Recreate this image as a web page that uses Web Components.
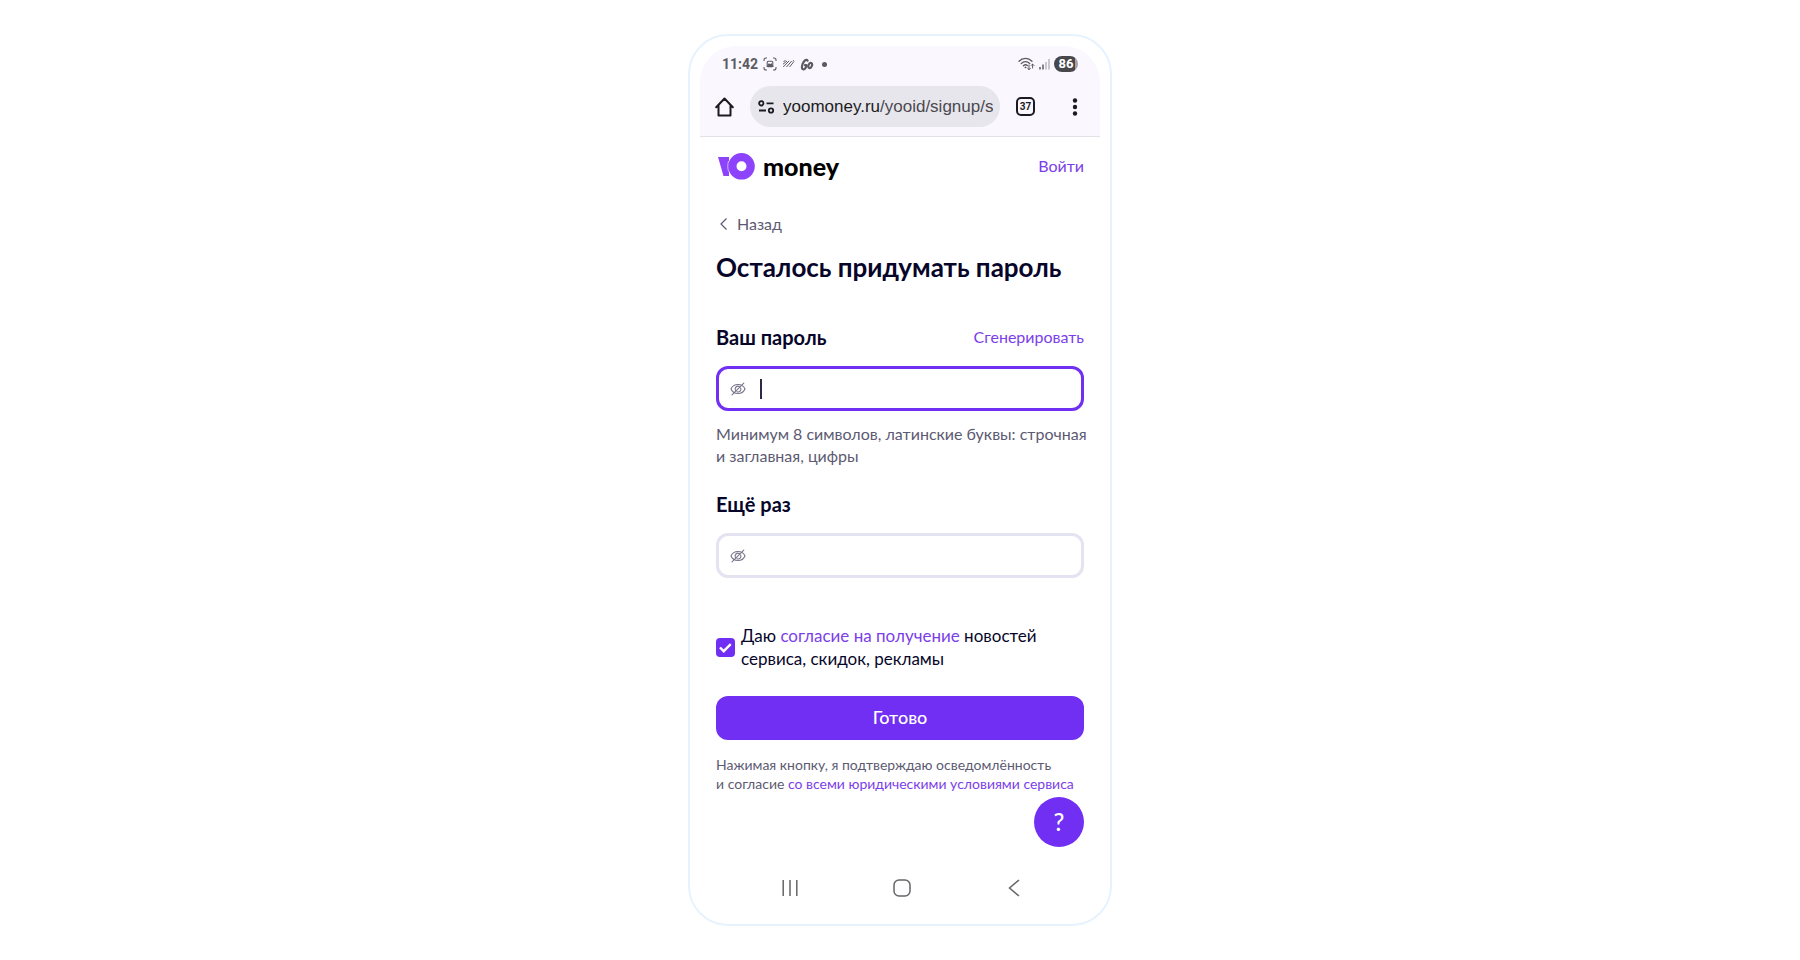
<!DOCTYPE html>
<html lang="ru">
<head>
<meta charset="utf-8">
<meta name="viewport" content="width=device-width, initial-scale=1">
<title>ЮMoney</title>
<style>
  body {
    margin: 0;
    padding: 34px 16px;
    background: #fff;
    color: #07052a;
    font-family: Lato, "Noto Sans", sans-serif;
    --accent: #712ff3;
    --link: #7b3ee8;
    --muted: #5c5a72;
    --line: #e4e3f1;
  }
</style>
</head>
<body>

<phone-frame>
  <status-bar time="11:42" battery="86"></status-bar>
  <browser-bar host="yoomoney.ru" path="/yooid/signup/s" tabs="37"></browser-bar>
  <signup-page></signup-page>
  <system-nav></system-nav>
</phone-frame>

<script>
function define(name, html, setup) {
  const template = document.createElement('template');
  template.innerHTML = html;

  window.customElements.define(name, class extends HTMLElement {
    constructor() {
      super();
      this.attachShadow({ mode: 'open' });
      this.shadowRoot.appendChild(template.content.cloneNode(true));
    }

    connectedCallback() {
      if (setup) setup(this, this.shadowRoot);
    }
  });
}

define('phone-frame', `
<style>
  :host {
    display: block;
    box-sizing: border-box;
    max-width: 424px;
    margin: 0 auto;
    padding: 10px;
    border: 2px solid #e6f3ff;
    border-radius: 40px;
  }
  .screen {
    border-radius: 36px;
    overflow: hidden;
  }
</style>
<div class="screen"><slot></slot></div>`);

define('status-bar', `
<style>
  :host {
    display: flex;
    align-items: center;
    justify-content: space-between;
    height: 36px;
    padding: 0 22px;
    background: #faf7fe;
    color: #5d5b61;
    font-family: Roboto, sans-serif;
  }
  .side { display: flex; align-items: center; gap: 5px; }
  .right { gap: 4px; }
  .time { font-size: 14px; font-weight: 700; line-height: 16px; }
  .dot { width: 5px; height: 5px; margin-left: 3px; border-radius: 50%; background: #5d5b61; }
  .battery {
    width: 24px;
    border-radius: 8px;
    background: linear-gradient(to right, #48474c 86%, #a3a2a8 86%);
    color: #fff;
    font-size: 13px;
    font-weight: 700;
    line-height: 16px;
    text-align: center;
  }
  svg { display: block; fill: none; stroke: currentColor; }
</style>
<div class="side">
  <span class="time"></span>
  <svg width="14" height="14" viewBox="0 0 14 14" stroke-width="1.1">
    <path d="M1 4V3a2 2 0 0 1 2-2h1M10 1h1a2 2 0 0 1 2 2v1M13 10v1a2 2 0 0 1-2 2h-1M4 13H3a2 2 0 0 1-2-2v-1"/>
    <rect x="4.2" y="4.2" width="5.6" height="5.6" rx="1"/>
    <path d="M4.4 9.4 6 7l1.2 1.3L8.4 7l1.4 2.4z" fill="currentColor"/>
  </svg>
  <svg width="13" height="10" viewBox="0 0 13 10">
    <path d="M1.5 2.5 3.5 1.5M1 5.2 5 2M1.2 8 7.2 1.8M4.5 8 9.7 2M7.6 8 12 2.4M10.8 2 11.8 1.4"/>
  </svg>
  <svg width="14" height="13" viewBox="0 0 14 13" stroke-width="2.2" stroke-linecap="round" stroke-linejoin="round">
    <path d="M7.6 2.6C6.4.8 4 2.4 2.6 6 1.4 9.4 1.8 11.4 3.2 11.4 4.8 11.4 6 9.5 6.6 7.2H5"/>
    <ellipse cx="10.2" cy="7.5" rx="1.7" ry="2.6" transform="rotate(22 10.2 7.5)"/>
  </svg>
  <span class="dot"></span>
</div>
<div class="side right">
  <svg width="17" height="14" viewBox="0 0 17 14" stroke-width="1.3" stroke-linecap="round">
    <path d="M1 4.3C4.6.4 10.4.4 14 4.3M3.2 6.6C5.7 4 9.3 4 11.8 6.6M5.4 8.8C6.7 7.6 8.3 7.6 9.4 8.6"/>
    <circle cx="7.4" cy="10.4" r=".6" fill="currentColor" stroke-width=".6"/>
    <path d="M11 8v4.6M9.6 11.3 11 12.7l1.4-1.4M14.6 11V7.2M13.2 8.5l1.4-1.4L16 8.5" stroke-width="1"/>
  </svg>
  <svg width="11" height="12" viewBox="0 0 11 12" stroke-width="1.5">
    <path d="M1 9v2.5M4 6.5v5"/>
    <path d="M7 4v7.5M10 1v10.5" stroke="#bab8bf"/>
  </svg>
  <span class="battery"></span>
</div>`, (el, root) => {
  root.querySelector('.time').textContent = el.getAttribute('time');
  root.querySelector('.battery').textContent = el.getAttribute('battery');
});

define('browser-bar', `
<style>
  :host {
    display: flex;
    align-items: center;
    gap: 16px;
    padding: 4px 21px 9px 15px;
    border-bottom: 1px solid #e2e1e7;
    background: #faf7fe;
    color: #1c1b22;
    font-family: "Liberation Sans", sans-serif;
  }
  button {
    display: block;
    padding: 0;
    border: 0;
    background: none;
    color: inherit;
    font: inherit;
  }
  svg { display: block; fill: none; stroke: currentColor; }
  .url {
    display: flex;
    flex: 1;
    align-items: center;
    gap: 8px;
    min-width: 0;
    height: 41px;
    padding: 0 6px 0 8px;
    border-radius: 21px;
    background: #e7e6ec;
  }
  .url svg { flex: none; }
  .address {
    overflow: hidden;
    color: #4a4950;
    font-size: 17px;
    line-height: 24px;
    white-space: nowrap;
  }
  .host { color: #1c1b22; }
  .tabs {
    box-sizing: border-box;
    width: 19px;
    height: 19px;
    border: 2px solid #1c1b22;
    border-radius: 5px;
    font: 700 10px/15px Roboto, sans-serif;
    text-align: center;
  }
  .menu { margin-left: 20px; }
</style>
<button type="button" aria-label="Домой">
  <svg width="19" height="20" viewBox="0 0 19 20" stroke-width="2" stroke-linejoin="round" stroke-linecap="round">
    <path d="M1.2 10.3 9.5 1.5l8.3 8.8M3.5 8.5v10h12v-10"/>
  </svg>
</button>
<div class="url">
  <svg width="17" height="14" viewBox="0 0 17 14" stroke-width="1.8">
    <circle cx="3.3" cy="3.3" r="2.2"/><path d="M8.5 3.3h7M1 10.5h7"/><circle cx="13" cy="10.5" r="2.2"/>
  </svg>
  <span class="address"><span class="host"></span><span class="path"></span></span>
</div>
<button type="button" class="tabs"></button>
<button type="button" class="menu" aria-label="Меню">
  <svg width="8" height="18" viewBox="0 0 8 18">
    <g fill="currentColor" stroke="none"><circle cx="4" cy="2.5" r="2.2"/><circle cx="4" cy="9" r="2.2"/><circle cx="4" cy="15.5" r="2.2"/></g>
  </svg>
</button>`, (el, root) => {
  root.querySelector('.host').textContent = el.getAttribute('host');
  root.querySelector('.path').textContent = el.getAttribute('path');
  root.querySelector('.tabs').textContent = el.getAttribute('tabs');
});

define('site-header', `
<style>
  :host {
    display: flex;
    align-items: center;
    justify-content: space-between;
    height: 57px;
  }
  .logo {
    display: flex;
    align-items: center;
    gap: 8px;
    padding-left: 1px;
    color: #000;
    font-size: 25px;
    font-weight: 900;
    line-height: 28px;
    text-decoration: none;
  }
  svg { display: block; }
</style>
<a class="logo" href="#">
  <svg width="38" height="28" viewBox="0 0 38 28" fill="#8c43fb">
    <path d="M1 5h11v19H6.5z"/>
    <path fill-rule="evenodd" d="M24.5 1a13.3 13.3 0 1 0 0 26.6 13.3 13.3 0 1 0 0-26.6zm0 8.3a5 5 0 1 1 0 10 5 5 0 1 1 0-10z"/>
    <path d="M11.6 9C10.5 12.3 10.5 16.3 11.6 19.6" fill="none" stroke="#fff" stroke-width=".6"/>
  </svg>
  <span>money</span>
</a>
<slot></slot>`);

define('password-field', `
<style>
  :host { display: block; }
  .head {
    display: flex;
    align-items: center;
    justify-content: space-between;
    margin-bottom: 17px;
    line-height: 24px;
  }
  label { font-size: 20px; font-weight: 700; }
  .box {
    display: flex;
    align-items: center;
    box-sizing: border-box;
    height: 45px;
    padding: 0 11px;
    border: 3px solid var(--line);
    border-radius: 12px;
  }
  :host([active]) .box { border-color: var(--accent); }
  button { padding: 0; border: 0; background: none; color: #77758a; }
  svg { display: block; fill: none; stroke: currentColor; }
  .caret { width: 2px; height: 20px; margin-left: 14px; }
  :host([active]) .caret { background: #2b2945; }
  input {
    flex: 1;
    min-width: 0;
    padding: 0;
    border: 0;
    outline: 0;
    background: none;
    color: inherit;
    font: inherit;
    caret-color: transparent;
  }
  ::slotted(p) {
    margin: 12px -8px 0 0;
    color: var(--muted);
    font-size: 16px;
    line-height: 22px;
  }
</style>
<div class="head"><label for="password"></label><slot name="action"></slot></div>
<div class="box">
  <button type="button" aria-label="Показать пароль">
    <svg width="16" height="14" viewBox="0 0 16 14" stroke-width="1.1" stroke-linecap="round">
      <path d="M1 7C3.5 1 12.5 1 15 7 12.5 13 3.5 13 1 7z"/>
      <path d="M5.4 8.2A2.8 2.8 0 0 1 9.2 4.5M10.7 6A2.8 2.8 0 0 1 7 9.7M2 12.8 13.8 1.2"/>
    </svg>
  </button>
  <span class="caret"></span>
  <input id="password" type="password" autocomplete="new-password">
</div>
<slot></slot>`, (el, root) => {
  root.querySelector('label').textContent = el.getAttribute('label');
});

define('consent-check', `
<style>
  :host { display: block; }
  label {
    display: flex;
    align-items: center;
    gap: 6px;
    font-size: 17px;
    line-height: 23px;
  }
  input {
    flex: none;
    appearance: none;
    width: 19px;
    height: 19px;
    margin: 0;
    border: 1px solid var(--line);
    border-radius: 4px;
  }
  input:checked {
    border: 0;
    background: var(--accent) url("data:image/svg+xml,%3Csvg xmlns='http://www.w3.org/2000/svg' viewBox='0 0 19 19'%3E%3Cpath d='M4 9.5 7.7 13.2 14.7 6.2' fill='none' stroke='white' stroke-width='2.4'/%3E%3C/svg%3E") center / 19px no-repeat;
  }
</style>
<label><input type="checkbox" checked><span><slot></slot></span></label>`);

define('primary-button', `
<style>
  :host { display: block; }
  button {
    display: block;
    width: 100%;
    height: 44px;
    padding: 0 0 2px;
    border: 0;
    border-radius: 12px;
    background: var(--accent);
    color: #fff;
    font: 500 18px/24px Lato, "Noto Sans", sans-serif;
  }
</style>
<button type="submit"><slot></slot></button>`);

define('help-button', `
<style>
  :host { display: block; }
  button {
    display: block;
    width: 50px;
    height: 50px;
    padding: 0;
    border: 0;
    border-radius: 50%;
    background: var(--accent);
    color: #fff;
    font: 500 24px/50px Lato, "Noto Sans", sans-serif;
  }
</style>
<button type="button" aria-label="Помощь">?</button>`);

define('signup-page', `
<style>
  :host { display: block; padding: 0 16px; }
  a { color: var(--link); font-size: 16px; text-decoration: none; }
  .back {
    display: flex;
    align-items: center;
    gap: 10px;
    margin-top: 18px;
    padding-left: 4px;
    color: var(--muted);
    line-height: 24px;
  }
  .back svg { fill: none; stroke: currentColor; }
  h1 { margin: 15px 0 42px; font-size: 26px; line-height: 32px; }
  .repeat { margin: 25px 0 46px; }
  .consent a { font-size: 17px; }
  primary-button { margin: 26px 0 15px; }
  .legal { margin: 0 0 4px; color: var(--muted); font-size: 14px; line-height: 19px; }
  .legal a { font-size: 14px; }
  .help { display: flex; justify-content: flex-end; }
</style>
<site-header><a href="#">Войти</a></site-header>
<a class="back" href="#">
  <svg width="7" height="12" viewBox="0 0 7 12" stroke-width="1.2"><path d="M6.5.5 1 6l5.5 5.5"/></svg>
  <span>Назад</span>
</a>
<h1>Осталось придумать пароль</h1>
<form>
  <password-field label="Ваш пароль" active>
    <a slot="action" href="#">Сгенерировать</a>
    <p>Минимум 8 символов, латинские буквы: строчная и&nbsp;заглавная, цифры</p>
  </password-field>
  <password-field class="repeat" label="Ещё раз"></password-field>
  <consent-check class="consent">Даю <a href="#">согласие на получение</a> новостей<br>сервиса, скидок, рекламы</consent-check>
  <primary-button>Готово</primary-button>
</form>
<p class="legal">Нажимая кнопку, я подтверждаю осведомлённость<br>и согласие <a href="#">со всеми юридическими условиями сервиса</a></p>
<div class="help"><help-button></help-button></div>`);

define('system-nav', `
<style>
  :host {
    display: grid;
    grid-template-columns: repeat(3, 112px);
    justify-content: center;
    align-items: center;
    height: 52px;
    padding: 15px 0 0 3px;
  }
  button {
    justify-self: center;
    padding: 0;
    border: 0;
    background: none;
    color: #66656a;
  }
  svg { display: block; fill: none; stroke: currentColor; }
</style>
<button type="button" aria-label="Недавние">
  <svg width="16" height="18" viewBox="0 0 16 18" stroke-width="1.5"><path d="M1.2 1v16M8 1v16M14.8 1v16"/></svg>
</button>
<button type="button" aria-label="Главный экран">
  <svg width="18" height="18" viewBox="0 0 18 18" stroke-width="1.5"><rect x="1" y="1" width="16" height="16" rx="5"/></svg>
</button>
<button type="button" aria-label="Назад">
  <svg width="12" height="18" viewBox="0 0 12 18" stroke-width="1.5"><path d="M11 1 1.5 9l9.5 8"/></svg>
</button>`);
</script>
</body>
</html>
